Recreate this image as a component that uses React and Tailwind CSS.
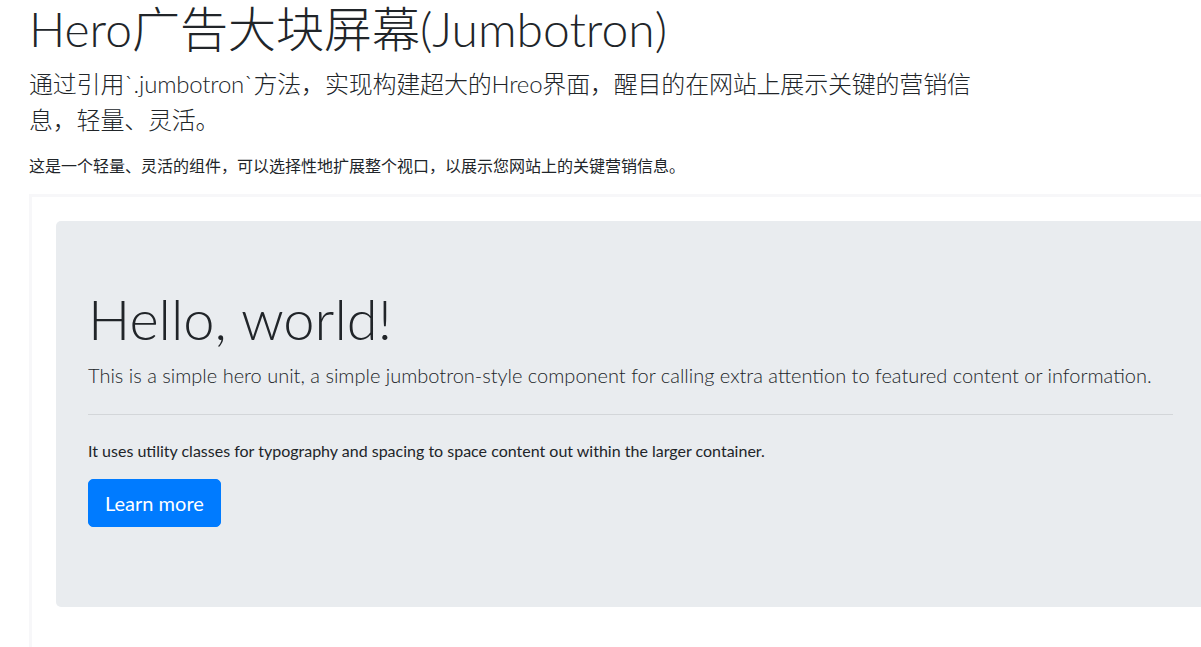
import React from "react";

export default function App() {
  return (
    <div
      className="min-h-screen bg-white text-[#212529] overflow-hidden"
      style={{ fontFamily: "Lato, 'Noto Sans CJK SC', sans-serif" }}
    >
      <div className="w-[1232px] pl-[29px]">
        {/* Page header */}
        <h1 className="text-[48px] font-light leading-[1.2] mb-2">
          Hero广告大块屏幕(Jumbotron)
        </h1>
        <p className="text-[24px] font-light leading-[1.5] mb-4 tracking-[-0.2px]">
          通过引用`.jumbotron`方法，实现构建超大的Hreo界面，醒目的在网站上展示关键的营销信
          <br />
          息，轻量、灵活。
        </p>
        <p className="text-[16px] leading-[1.5] mb-4">
          这是一个轻量、灵活的组件，可以选择性地扩展整个视口，以展示您网站上的关键营销信息。
        </p>

        {/* Example frame */}
        <div className="border-[3px] border-[#f7f7f9] p-6 min-h-[460px]">
          <div className="bg-[#e9ecef] rounded-[5px] px-8 py-16">
            <h1 className="text-[56px] font-light leading-[1.2] mb-2">Hello, world!</h1>
            <p className="text-[20px] font-light leading-[1.5]">
              This is a simple hero unit, a simple jumbotron-style component for calling extra attention to featured content or information.
            </p>
            <hr className="my-6 border-0 border-t border-[#d3d6d9]" />
            <p className="text-[16px] leading-[1.5] mb-4">
              It uses utility classes for typography and spacing to space content out within the larger container.
            </p>
            <div className="mb-4">
              <button className="bg-[#007bff] text-white text-[20px] leading-[1.5] px-4 py-2 rounded-[5px] border border-[#007bff]">
                Learn more
              </button>
            </div>
          </div>
        </div>
      </div>
    </div>
  );
}
